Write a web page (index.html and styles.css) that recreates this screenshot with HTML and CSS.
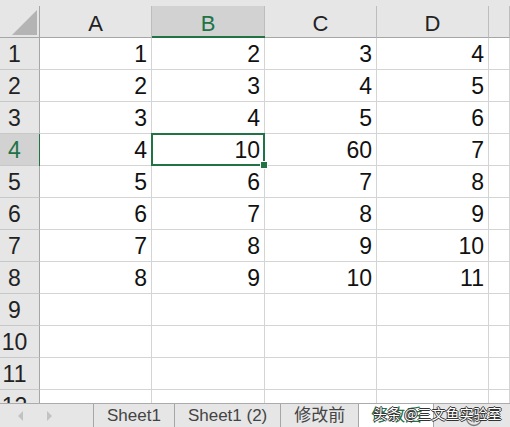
FILE: index.html
```html
<!DOCTYPE html>
<html lang="zh-CN">
<head>
    <meta charset="UTF-8">
    <title>修改后</title>
    <link rel="stylesheet" href="styles.css">
</head>
<body>
    <div class="sheet">
        <div class="grid">
            <div class="corner"><span class="tri"></span></div>
            <div class="colhead">A</div>
            <div class="colhead sel">B</div>
            <div class="colhead">C</div>
            <div class="colhead">D</div>
            <div class="colhead"></div>

            <div class="rowhead">1</div><div class="cell">1</div><div class="cell">2</div><div class="cell">3</div><div class="cell">4</div><div class="cell"></div>
            <div class="rowhead">2</div><div class="cell">2</div><div class="cell">3</div><div class="cell">4</div><div class="cell">5</div><div class="cell"></div>
            <div class="rowhead">3</div><div class="cell">3</div><div class="cell">4</div><div class="cell">5</div><div class="cell">6</div><div class="cell"></div>
            <div class="rowhead sel">4</div><div class="cell">4</div><div class="cell active">10</div><div class="cell">60</div><div class="cell">7</div><div class="cell"></div>
            <div class="rowhead">5</div><div class="cell">5</div><div class="cell">6</div><div class="cell">7</div><div class="cell">8</div><div class="cell"></div>
            <div class="rowhead">6</div><div class="cell">6</div><div class="cell">7</div><div class="cell">8</div><div class="cell">9</div><div class="cell"></div>
            <div class="rowhead">7</div><div class="cell">7</div><div class="cell">8</div><div class="cell">9</div><div class="cell">10</div><div class="cell"></div>
            <div class="rowhead">8</div><div class="cell">8</div><div class="cell">9</div><div class="cell">10</div><div class="cell">11</div><div class="cell"></div>
            <div class="rowhead">9</div><div class="cell"></div><div class="cell"></div><div class="cell"></div><div class="cell"></div><div class="cell"></div>
            <div class="rowhead">10</div><div class="cell"></div><div class="cell"></div><div class="cell"></div><div class="cell"></div><div class="cell"></div>
            <div class="rowhead">11</div><div class="cell"></div><div class="cell"></div><div class="cell"></div><div class="cell"></div><div class="cell"></div>
            <div class="rowhead">12</div><div class="cell"></div><div class="cell"></div><div class="cell"></div><div class="cell"></div><div class="cell"></div>
        </div>

        <div class="tabs">
            <div class="nav">
                <span class="arrow left"></span>
                <span class="arrow right"></span>
            </div>
            <div class="tab">Sheet1</div>
            <div class="tab">Sheet1 (2)</div>
            <div class="tab">修改前</div>
            <div class="tab active">修改后</div>
            <div class="add">
                <svg width="18" height="18" viewBox="0 0 18 18">
                    <circle cx="9" cy="9" r="7.5" fill="none" stroke="#7a7a7a" stroke-width="1.3"/>
                    <path d="M9 4.5v9M4.5 9h9" stroke="#7a7a7a" stroke-width="1.6"/>
                </svg>
            </div>
            <div class="watermark">头条 @三文鱼实验室</div>
        </div>
    </div>
</body>
</html>
```

FILE: styles.css
```css
* {
    margin: 0;
    padding: 0;
    box-sizing: border-box;
}

body {
    font-family: 'Liberation Sans', 'Noto Sans CJK SC', sans-serif;
    background: #fff;
    overflow: hidden;
}

.sheet {
    width: 510px;
    height: 427px;
    overflow: hidden;
}

.grid {
    display: grid;
    grid-template-columns: 40px 112px 113px 112px 112px 21px;
    grid-template-rows: 32px;
    grid-auto-rows: 32px;
    height: 403px;
    padding-top: 6px;
    background: #e6e6e6;
    overflow: hidden;
}

.corner {
    display: flex;
    justify-content: flex-end;
    align-items: flex-end;
    padding: 0 2px 2px 0;
    border-right: 1px solid #a6a6a6;
    border-bottom: 1px solid #a6a6a6;
}

.tri {
    width: 25px;
    height: 25px;
    background: #b4b4b4;
    clip-path: polygon(100% 0, 100% 100%, 0 100%);
}

.colhead {
    position: relative;
    font-size: 22px;
    line-height: 31px;
    padding-top: 2px;
    text-align: center;
    color: #222;
    border-right: 1px solid #bdbdbd;
    border-bottom: 1px solid #a6a6a6;
}

.colhead.sel {
    background: #d2d2d2;
    color: #217346;
}

.colhead.sel::after {
    content: "";
    position: absolute;
    left: 0;
    right: -1px;
    bottom: -1px;
    height: 2px;
    background: #217346;
}

.rowhead {
    position: relative;
    font-size: 23px;
    line-height: 31px;
    padding: 1px 10px 0 0;
    text-align: center;
    color: #222;
    border-right: 1px solid #a6a6a6;
    border-bottom: 1px solid #c8c8c8;
}

.rowhead.sel {
    background: #d2d2d2;
    color: #217346;
}

.rowhead.sel::after {
    content: "";
    position: absolute;
    top: 0;
    bottom: -1px;
    right: -2px;
    width: 2px;
    background: #217346;
}

.cell {
    position: relative;
    background: #fff;
    font-size: 23px;
    line-height: 31px;
    padding: 1px 4px 0 0;
    text-align: right;
    color: #111;
    border-right: 1px solid #d4d4d4;
    border-bottom: 1px solid #d4d4d4;
}

.cell.active::after {
    content: "";
    position: absolute;
    left: -1px;
    top: -1px;
    right: -1px;
    bottom: -1px;
    border: 2px solid #217346;
}

.cell.active::before {
    content: "";
    position: absolute;
    right: -3px;
    bottom: -3px;
    width: 6px;
    height: 6px;
    background: #217346;
    box-shadow: 0 0 0 1px #fff;
    z-index: 1;
}

.tabs {
    position: relative;
    display: flex;
    height: 24px;
    background: #e6e6e6;
    border-top: 1px solid #ababab;
    font-size: 17px;
    color: #444;
}

.nav {
    width: 93px;
    display: flex;
    align-items: center;
    gap: 24px;
    padding-left: 18px;
}

.arrow {
    width: 0;
    height: 0;
    border-top: 5px solid transparent;
    border-bottom: 5px solid transparent;
}

.arrow.left {
    border-right: 5px solid #c2c2c2;
}

.arrow.right {
    border-left: 5px solid #c2c2c2;
}

.tab {
    padding: 1px 13px 0 13px;
    line-height: 21px;
    border-left: 1px solid #a6a6a6;
    white-space: nowrap;
}

.tab.active {
    background: #fff;
    color: #217346;
    padding: 1px 11px 0 12px;
    border-right: 1px solid #a6a6a6;
}

.add {
    display: flex;
    align-items: center;
    padding: 4px 0 0 31px;
}

.watermark {
    position: absolute;
    left: 373px;
    top: -1px;
    font-family: 'Noto Sans CJK SC', sans-serif;
    font-size: 14px;
    color: #fff;
    white-space: nowrap;
    text-shadow: 1px 0 0 #333, -1px 0 0 #333, 0 1px 0 #333, 0 -1px 0 #333;
}
```
